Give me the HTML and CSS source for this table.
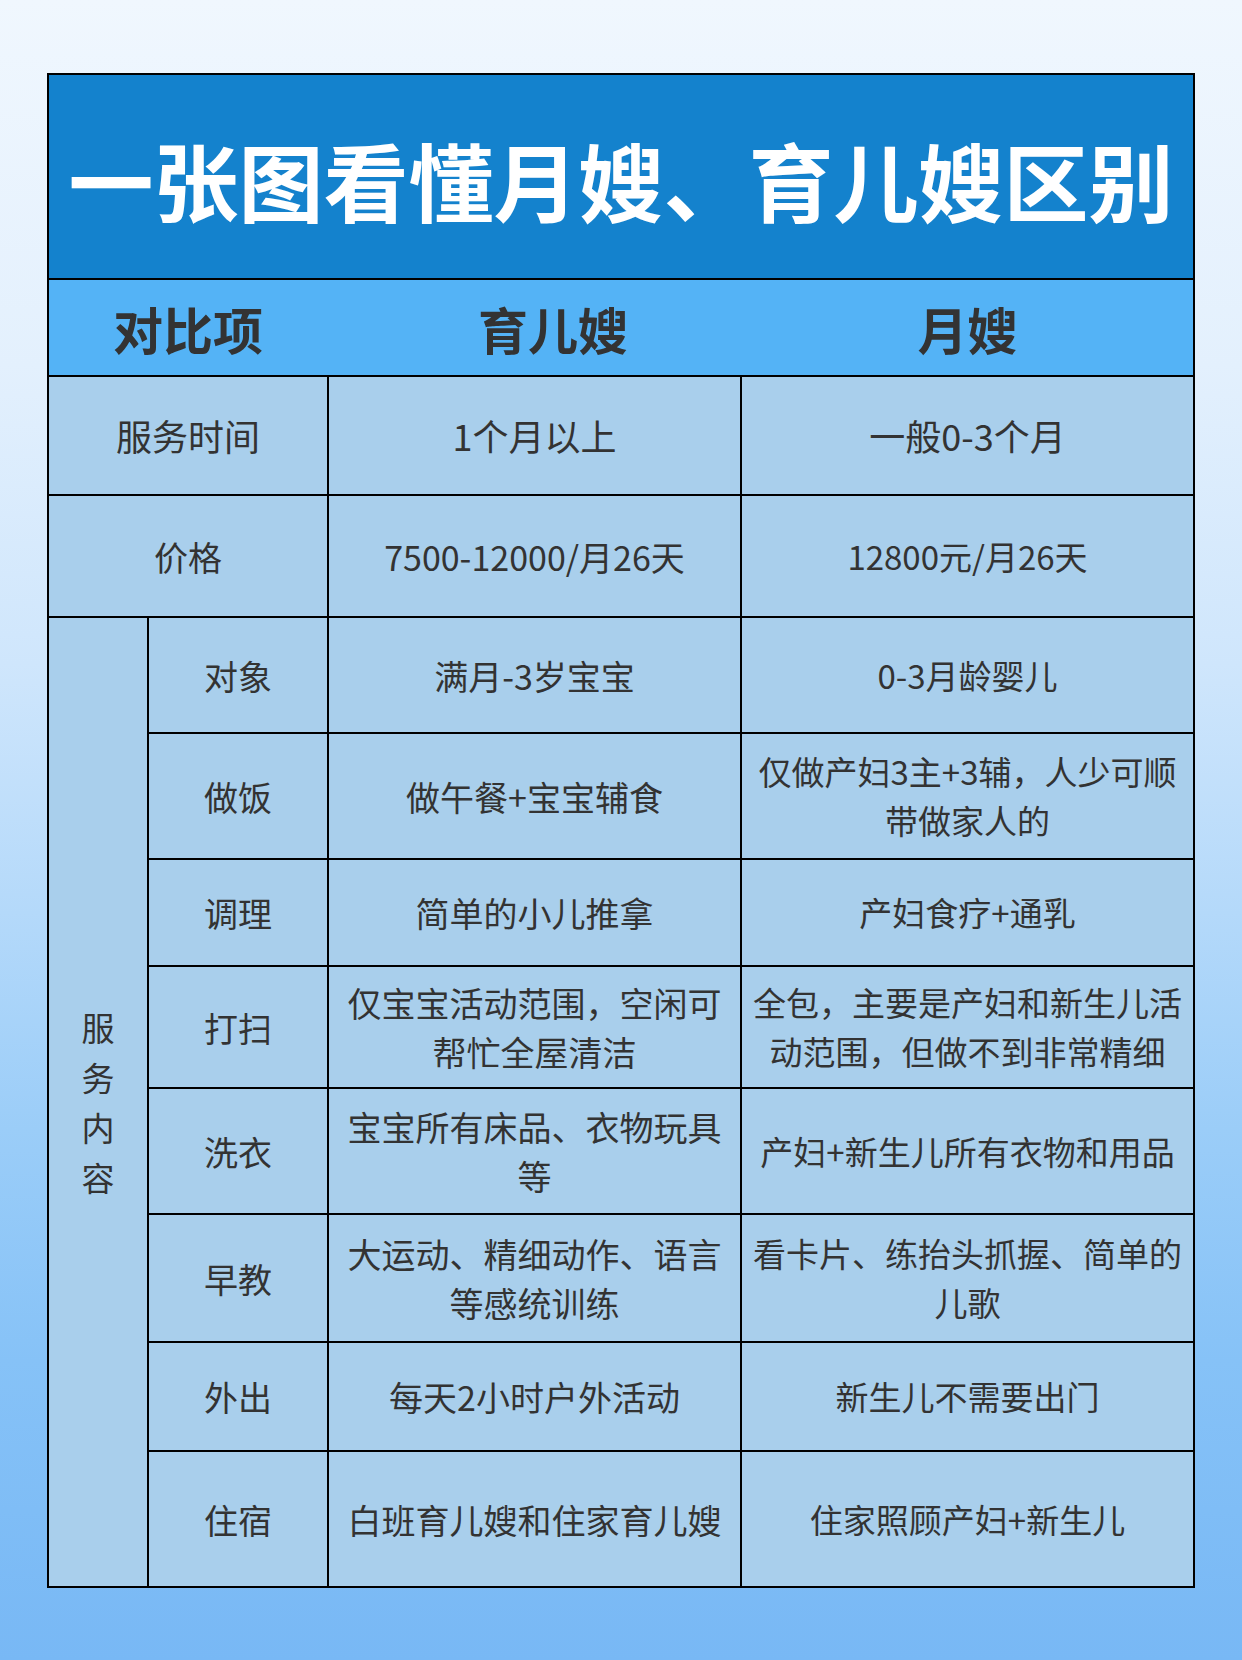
FILE: index.html
```html
<!DOCTYPE html>
<html lang="zh-CN">
<head>
<meta charset="utf-8">
<title>一张图看懂月嫂、育儿嫂区别</title>
<link rel="stylesheet" href="styles.css">
</head>
<body>
<div class="page">
  <div class="table">
    <div class="title">一张图看懂月嫂、育儿嫂区别</div>
    <div class="head">
      <div class="hcell">对比项</div>
      <div class="hcell hmid">育儿嫂</div>
      <div class="hcell">月嫂</div>
    </div>

    <div class="cell wide big">服务时间</div>
    <div class="cell big">1个月以上</div>
    <div class="cell big">一般0-3个月</div>

    <div class="cell wide">价格</div>
    <div class="cell">7500-12000/月26天</div>
    <div class="cell r">12800元/月26天</div>

    <div class="cell group"><span class="vert">服务内容</span></div>

    <div class="cell">对象</div>
    <div class="cell">满月-3岁宝宝</div>
    <div class="cell r">0-3月龄婴儿</div>

    <div class="cell">做饭</div>
    <div class="cell">做午餐+宝宝辅食</div>
    <div class="cell r">仅做产妇3主+3辅，人少可顺<br>带做家人的</div>

    <div class="cell">调理</div>
    <div class="cell">简单的小儿推拿</div>
    <div class="cell r">产妇食疗+通乳</div>

    <div class="cell">打扫</div>
    <div class="cell">仅宝宝活动范围，空闲可<br>帮忙全屋清洁</div>
    <div class="cell r">全包，主要是产妇和新生儿活<br>动范围，但做不到非常精细</div>

    <div class="cell">洗衣</div>
    <div class="cell">宝宝所有床品、衣物玩具<br>等</div>
    <div class="cell r">产妇+新生儿所有衣物和用品</div>

    <div class="cell">早教</div>
    <div class="cell">大运动、精细动作、语言<br>等感统训练</div>
    <div class="cell r">看卡片、练抬头抓握、简单的<br>儿歌</div>

    <div class="cell">外出</div>
    <div class="cell">每天2小时户外活动</div>
    <div class="cell r">新生儿不需要出门</div>

    <div class="cell">住宿</div>
    <div class="cell">白班育儿嫂和住家育儿嫂</div>
    <div class="cell r">住家照顾产妇+新生儿</div>
  </div>
</div>
</body>
</html>
```

FILE: styles.css
```css
html, body {
  margin: 0;
  padding: 0;
}

body {
  font-family: "Noto Sans CJK SC", "Noto Sans", sans-serif;
  color: #333333;
}

.page {
  width: 1242px;
  height: 1660px;
  box-sizing: border-box;
  padding: 73px 0 0 47px;
  background: linear-gradient(180deg,
    #f0f7fe 0%,
    #e3f0fd 22%,
    #cfe6fc 40%,
    #b4d9fa 55%,
    #9bcdf8 68%,
    #86c2f7 82%,
    #78b8f5 100%);
}

.table {
  display: grid;
  width: max-content;
  grid-template-columns: 98px 178px 411px 451px;
  grid-template-rows: 203px 95px 117px 120px 114px 124px 105px 120px 124px 126px 107px 134px;
  gap: 2px;
  padding: 2px;
  background: #000000;
}

.title {
  grid-column: 1 / -1;
  background: #1482cd;
  color: #ffffff;
  font-size: 85px;
  font-weight: 700;
  display: flex;
  align-items: center;
  justify-content: center;
  white-space: nowrap;
  padding-top: 4px;
}

.head {
  grid-column: 1 / -1;
  background: #54b3f6;
  display: grid;
  grid-template-columns: 278px 411px 451px;
  column-gap: 2px;
}

.hcell {
  display: flex;
  align-items: center;
  justify-content: center;
  font-size: 50px;
  font-weight: 700;
  color: #333333;
}

.hmid {
  padding-left: 37px;
}

.cell {
  background: #a9cfec;
  display: flex;
  align-items: center;
  justify-content: center;
  text-align: center;
  font-size: 34px;
  line-height: 49px;
  padding: 0 2px;
  white-space: nowrap;
}

.cell.r {
  font-size: 33px;
}

.cell.wide {
  grid-column: 1 / 3;
}

.cell.big {
  font-size: 36px;
}

.cell.group {
  grid-column: 1;
  grid-row: 5 / 13;
  font-size: 33px;
  line-height: 50px;
  white-space: normal;
}

.vert {
  display: block;
  width: 1em;
  word-break: break-all;
}
```
